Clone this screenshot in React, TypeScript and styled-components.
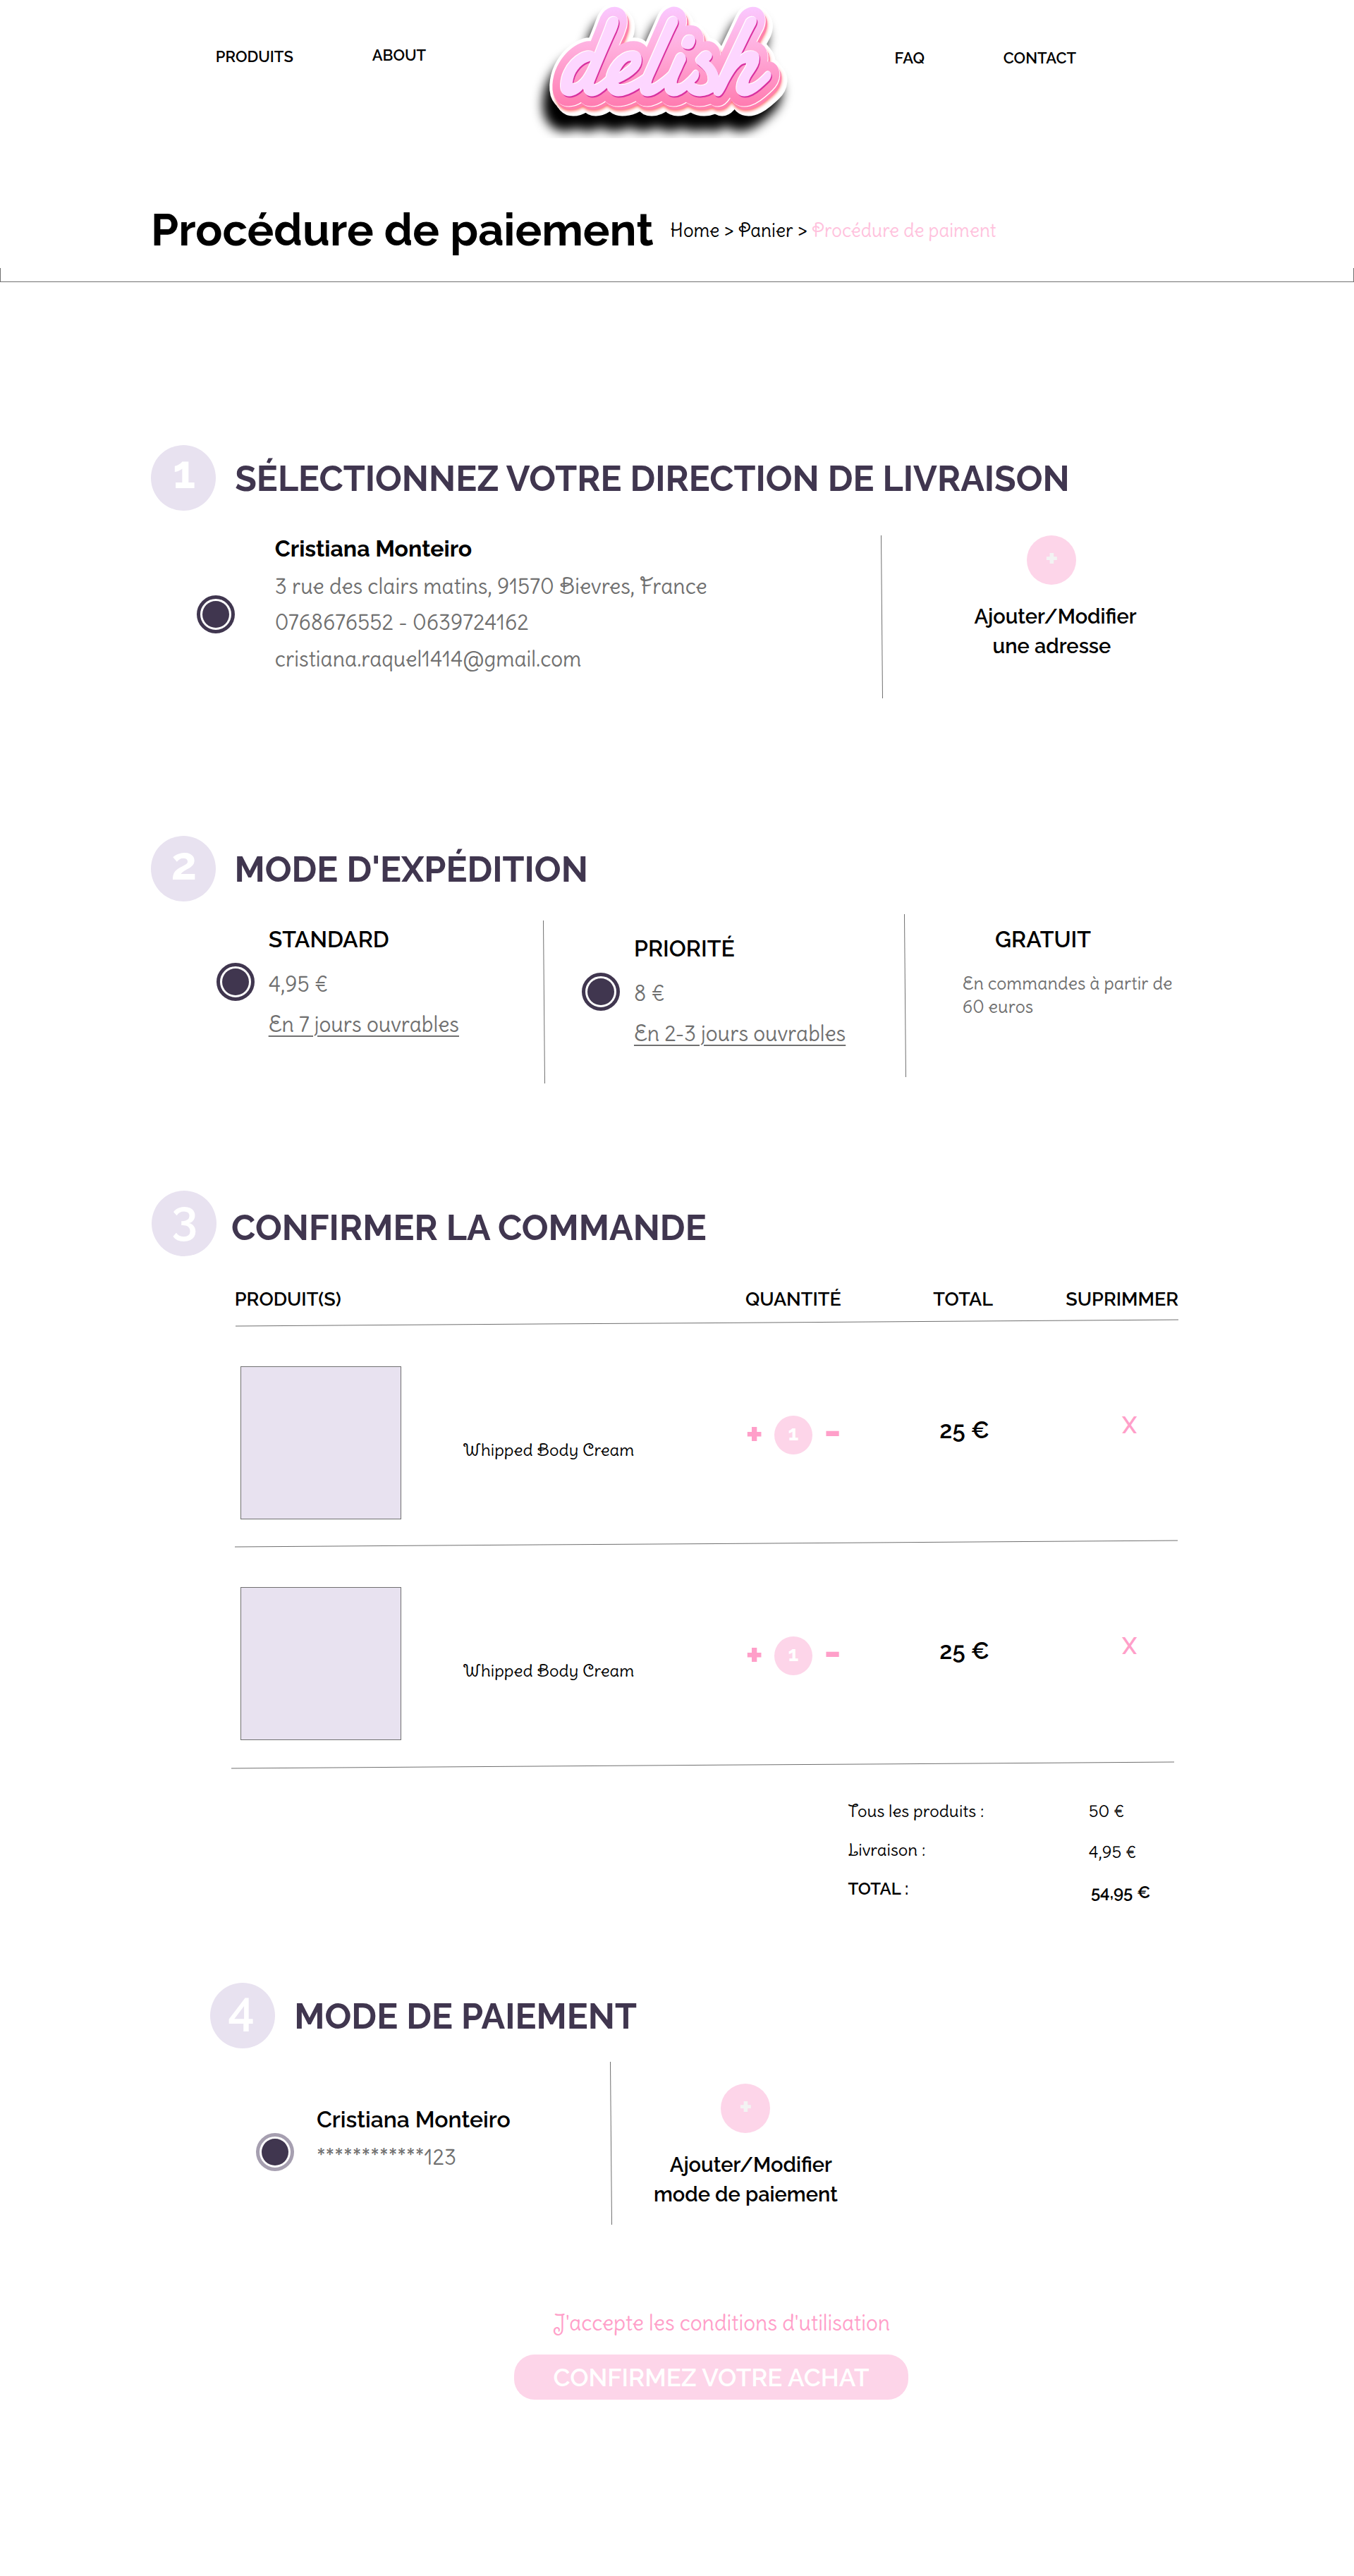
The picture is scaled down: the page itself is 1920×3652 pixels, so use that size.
import React from "react";
import styled, { createGlobalStyle } from "styled-components";

const sans = `Raleway, Lato, sans-serif`;
const swash = `"Delius Swash Caps", Lato, sans-serif`;
const plum = "#40364f";
const lilac = "#e8e2f0";
const rose = "#fdd5e9";
const pink = "#ff9fc9";
const grey = "#707070";

const GlobalStyle = createGlobalStyle`
  *, *::before, *::after { box-sizing: border-box; }
  body { margin: 0; background: #fff; color: #000; }
`;

const Page = styled.div`
  width: 1920px;
  height: 3652px;
  overflow: hidden;
  background: #fff;
`;

const Sans = styled.span<{ $size: number; $weight?: number; $lh: number; $color?: string }>`
  display: block;
  font-family: ${sans};
  font-size: ${(p) => p.$size}px;
  font-weight: ${(p) => p.$weight ?? 600};
  line-height: ${(p) => p.$lh}px;
  color: ${(p) => p.$color ?? "#000"};
  white-space: nowrap;
`;

const Swash = styled.span<{ $size: number; $lh: number; $color?: string; $underline?: boolean }>`
  display: block;
  font-family: ${swash};
  font-size: ${(p) => p.$size}px;
  line-height: ${(p) => p.$lh}px;
  color: ${(p) => p.$color ?? grey};
  text-decoration: ${(p) => (p.$underline ? "underline" : "none")};
  text-decoration-thickness: 2px;
  text-underline-offset: 5px;
`;

const TopBar = styled.header`
  display: flex;
  height: 196px;
  padding-left: 305.8px;
`;
const NavLink = styled.a<{ $width: number; $top: number }>`
  width: ${(p) => p.$width}px;
  padding-top: ${(p) => p.$top}px;
  font: 600 22px/26px ${sans};
  color: #000;
  white-space: nowrap;
`;
const LogoBox = styled.div`
  width: 480px;
  height: 196px;
  margin-right: 88.6px;
  overflow: hidden;
`;

const TitleRow = styled.div`
  display: flex;
  height: 184px;
  padding: 91.5px 0 0 214px;
`;
const Title = styled.h1`
  width: 736.3px;
  margin: 0;
  font: 700 63px/76px ${sans};
  white-space: nowrap;
`;
const Breadcrumb = styled.nav`
  margin-top: 21.5px;
  font: 400 26px/36px ${swash};
  white-space: nowrap;
`;
const Current = styled.span`
  color: #ffc2dd;
`;
const TitleRule = styled.div`
  height: 20px;
  border: 1px solid ${grey};
  border-top: 0;
`;

const Steps = styled.main`
  padding-top: 231px;
`;
const Section = styled.section<{ $height: number }>`
  height: ${(p) => p.$height}px;
`;
const StepHead = styled.div<{ $left: number }>`
  display: flex;
  height: 93px;
  padding-left: ${(p) => p.$left}px;
`;
const StepBadge = styled.div<{ $indent: number }>`
  width: 92px;
  height: 93px;
  padding-left: ${(p) => p.$indent}px;
  border-radius: 50%;
  background: ${lilac};
`;
const StepTitle = styled.h2<{ $gap: number; $top: number }>`
  margin: ${(p) => p.$top}px 0 0 ${(p) => p.$gap}px;
  font: 700 50px/60px ${sans};
  color: ${plum};
  white-space: nowrap;
`;

const Columns = styled.div<{ $left: number }>`
  display: flex;
  align-items: flex-start;
  padding-left: ${(p) => p.$left}px;
`;
const RadioRing = styled.span<{ $top: number; $left?: number; $soft?: boolean }>`
  display: flex;
  flex: none;
  align-items: center;
  justify-content: center;
  width: 54px;
  height: 54px;
  margin-top: ${(p) => p.$top}px;
  margin-left: ${(p) => p.$left ?? 0}px;
  border: 5px solid ${(p) => (p.$soft ? "#a69fb0" : plum)};
  border-radius: 50%;
`;
const RadioDot = styled.span`
  width: 38px;
  height: 38px;
  border-radius: 50%;
  background: ${plum};
`;
const Details = styled.div<{ $left: number; $top: number; $width: number }>`
  width: ${(p) => p.$width}px;
  margin-left: ${(p) => p.$left}px;
  margin-top: ${(p) => p.$top}px;
`;
const Indented = styled.div`
  padding-left: 46.3px;
`;
const Lines = styled.div<{ $gap: number }>`
  margin-top: ${(p) => p.$gap}px;
`;
const VRule = styled.div<{ $top: number }>`
  flex: none;
  width: 1px;
  height: 231px;
  margin-top: ${(p) => p.$top}px;
  background: ${grey};
  transform: rotate(-0.5deg);
`;
const HRule = styled.div<{ $left: number; $top?: number }>`
  width: 1337px;
  height: 1px;
  margin: ${(p) => p.$top ?? 0}px 0 0 ${(p) => p.$left}px;
  background: ${grey};
  transform: rotate(-0.386deg);
`;
const AddBlock = styled.button<{ $left: number; $top: number; $width: number }>`
  display: flex;
  flex-direction: column;
  align-items: center;
  width: ${(p) => p.$width}px;
  margin: ${(p) => p.$top}px 0 0 ${(p) => p.$left}px;
  padding: 0;
  border: 0;
  background: none;
`;
const AddCircle = styled.span`
  width: 70px;
  height: 70px;
  margin-bottom: 25px;
  border-radius: 50%;
  background: ${rose};
  text-align: center;
`;
const AddLine = styled.span<{ $shift?: number }>`
  padding-left: ${(p) => p.$shift ?? 0}px;
  font: 600 29px/41.7px ${sans};
  color: #000;
  white-space: nowrap;
`;

const TableHead = styled.div`
  display: grid;
  grid-template-columns: 724.3px 266.2px 188px 170px;
  padding: 45px 0 0 332.8px;
`;
const ItemRow = styled.div`
  display: flex;
  align-items: flex-start;
  height: 312.2px;
  padding-left: 341px;
`;
const Thumb = styled.div`
  width: 228px;
  height: 217px;
  margin-top: 60.7px;
  border: 1px solid ${grey};
  background: ${lilac};
`;
const Cell = styled.div<{ $width: number; $top: number; $left?: number }>`
  display: flex;
  width: ${(p) => p.$width}px;
  margin-left: ${(p) => p.$left ?? 0}px;
  padding-top: ${(p) => p.$top}px;
`;
const QtyCircle = styled.span`
  width: 54px;
  height: 55px;
  border-radius: 50%;
  background: ${rose};
  text-align: center;
`;
const QtySign = styled.span<{ $width: number; $indent?: number; $lh: number }>`
  width: ${(p) => p.$width}px;
  height: 55px;
  padding-left: ${(p) => p.$indent ?? 0}px;
  font: 700 60px/${(p) => p.$lh}px ${sans};
  color: ${pink};
`;
const Totals = styled.div`
  display: grid;
  grid-template-columns: 341.4px 130px;
  grid-auto-rows: 55px;
  margin: 37.6px 0 0 1202.4px;
`;
const Amount = styled.div<{ $top?: number; $left?: number }>`
  padding: ${(p) => p.$top ?? 0}px 0 0 ${(p) => p.$left ?? 0}px;
`;
const Terms = styled.div`
  padding: 1.5px 0 0 784.7px;
  margin-bottom: 27.1px;
`;
const Confirm = styled.button`
  display: block;
  width: 559px;
  height: 64px;
  margin-left: 729px;
  padding: 0 0 0 55.5px;
  border: 0;
  border-radius: 29px;
  background: ${rose};
  text-align: left;
`;

const Logo = () => (
  <svg width="480" height="196" viewBox="0 0 480 196" role="img" aria-label="delish">
    <defs>
      <linearGradient id="candy" gradientUnits="userSpaceOnUse" x1="0" y1="-122" x2="0" y2="18">
        <stop offset="0" stopColor="#fac8ff" />
        <stop offset="0.4" stopColor="#ffb0de" />
        <stop offset="1" stopColor="#ff7bb0" />
      </linearGradient>
      <filter id="shade" x="-20%" y="-30%" width="140%" height="180%">
        <feGaussianBlur stdDeviation="7.5" />
      </filter>
      <filter id="glow" x="-20%" y="-30%" width="140%" height="180%">
        <feGaussianBlur stdDeviation="2" />
      </filter>
      <g id="word">
        <text
          transform="translate(92 132.5) skewX(-3)"
          fontFamily={`Damion, Pacifico, "Liberation Serif", cursive`}
          fontSize="167"
          textLength="284"
          lengthAdjust="spacingAndGlyphs"
        >
          delish
        </text>
      </g>
    </defs>
    <g strokeLinejoin="round" strokeLinecap="round">
      <use href="#word" x="-5" y="25" fill="#000" stroke="#000" strokeWidth="52" filter="url(#shade)" />
      <use href="#word" x="0" y="0.5" fill="#fff" stroke="#fff" strokeWidth="41" />
      <use href="#word" x="4" y="5" fill="#fff" stroke="#fff" strokeWidth="41" />
      <use href="#word" x="7" y="9" fill="#fff" stroke="#fff" strokeWidth="41" />
      <use href="#word" x="3" y="7" fill="#ff6a6a" stroke="#ff6a6a" strokeWidth="31" filter="url(#glow)" />
      <use href="#word" x="3" y="5" fill="#ff80ae" stroke="#ff80ae" strokeWidth="31" />
      <use href="#word" x="1" y="1.3" fill="#fff" stroke="#fff" strokeWidth="31" />
      <use href="#word" fill="url(#candy)" stroke="url(#candy)" strokeWidth="31" />
      <use href="#word" x="1.2" y="2.8" fill="#d8309f" stroke="#d8309f" strokeWidth="3" />
      <use href="#word" x="-1" y="-1" fill="#fff" stroke="#fff" strokeWidth="3" />
      <use href="#word" fill="#fdd6ff" stroke="#fdd6ff" strokeWidth="3" />
    </g>
  </svg>
);

const Radio = ({ top, left, soft }: { top: number; left?: number; soft?: boolean }) => (
  <RadioRing $top={top} $left={left} $soft={soft}>
    <RadioDot />
  </RadioRing>
);

const Add = ({ left, top, width, shift, label }: { left: number; top: number; width: number; shift: number; label: string }) => (
  <AddBlock $left={left} $top={top} $width={width}>
    <AddCircle>
      <Sans $size={45} $weight={700} $lh={68.6} $color="#f3f3f3">+</Sans>
    </AddCircle>
    <AddLine $shift={shift}>Ajouter/Modifier</AddLine>
    <AddLine>{label}</AddLine>
  </AddBlock>
);

const Item = ({ name, quantity, price }: { name: string; quantity: number; price: string }) => (
  <ItemRow>
    <Thumb />
    <Cell $left={87.5} $width={400.6} $top={164}>
      <Swash $size={24} $lh={30} $color="#000">{name}</Swash>
    </Cell>
    <Cell $width={275.2} $top={130.7}>
      <QtySign $width={40.9} $lh={52}>+</QtySign>
      <QtyCircle>
        <Sans $size={30} $weight={700} $lh={49} $color="#fff">{quantity}</Sans>
      </QtyCircle>
      <QtySign $width={40} $indent={16} $lh={42}>-</QtySign>
    </Cell>
    <Cell $width={258.7} $top={131.7}>
      <Sans $size={33} $lh={40}>{price}</Sans>
    </Cell>
    <Cell $width={30} $top={124.5}>
      <Sans $size={33} $lh={40} $color={pink}>X</Sans>
    </Cell>
  </ItemRow>
);

export default function App() {
  return (
    <>
      <GlobalStyle />
      <Page>
        <TopBar>
          <NavLink $width={221.9} $top={67}>PRODUITS</NavLink>
          <NavLink $width={172.3} $top={65}>ABOUT</NavLink>
          <LogoBox><Logo /></LogoBox>
          <NavLink $width={154.2} $top={69}>FAQ</NavLink>
          <NavLink $width={110} $top={69}>CONTACT</NavLink>
        </TopBar>
        <TitleRow>
          <Title>Procédure de paiement</Title>
          <Breadcrumb>
            Home &gt; Panier &gt; <Current>Procédure de paiment</Current>
          </Breadcrumb>
        </TitleRow>
        <TitleRule />

        <Steps>
          <Section $height={553.7}>
            <StepHead $left={214}>
              <StepBadge $indent={31}><Sans $size={65} $weight={700} $lh={77.6} $color="#fff">1</Sans></StepBadge>
              <StepTitle $gap={27.2} $top={17.8}>SÉLECTIONNEZ VOTRE DIRECTION DE LIVRAISON</StepTitle>
            </StepHead>
            <Columns $left={279}>
              <Radio top={120.3} />
              <Details $left={56.8} $top={35.4} $width={860}>
                <Sans $size={32} $weight={700} $lh={38}>Cristiana Monteiro</Sans>
                <Lines $gap={8.2}>
                  <Swash $size={30} $lh={51.6}>3 rue des clairs matins, 91570 Bievres, France</Swash>
                  <Swash $size={30} $lh={51.6}>0768676552 - 0639724162</Swash>
                  <Swash $size={30} $lh={51.6}>cristiana.raquel1414@gmail.com</Swash>
                </Lines>
              </Details>
              <VRule $top={35} />
              <Add left={120.7} top={35} width={240} shift={10} label="une adresse" />
            </Columns>
          </Section>

          <Section $height={503.3}>
            <StepHead $left={214}>
              <StepBadge $indent={28.5}><Sans $size={65} $weight={700} $lh={78.8} $color="#fff">2</Sans></StepBadge>
              <StepTitle $gap={26.5} $top={18.4}>MODE D'EXPÉDITION</StepTitle>
            </StepHead>
            <Columns $left={307}>
              <Radio top={87.8} />
              <Details $left={19.7} $top={35.5} $width={390.4}>
                <Sans $size={32} $lh={38}>STANDARD</Sans>
                <Lines $gap={15.5}>
                  <Swash $size={30} $lh={57}>4,95 €</Swash>
                  <Swash $size={30} $lh={57} $underline as="u">En 7 jours ouvrables</Swash>
                </Lines>
              </Details>
              <VRule $top={27.3} />
              <Radio top={101} left={53} />
              <Details $left={19.9} $top={48.7} $width={383.8}>
                <Sans $size={32} $lh={38}>PRIORITÉ</Sans>
                <Lines $gap={15.5}>
                  <Swash $size={30} $lh={57}>8 €</Swash>
                  <Swash $size={30} $lh={57} $underline as="u">En 2-3 jours ouvrables</Swash>
                </Lines>
              </Details>
              <VRule $top={18.3} />
              <Details $left={81} $top={35.5} $width={310}>
                <Indented><Sans $size={32} $lh={38}>GRATUIT</Sans></Indented>
                <Lines $gap={27.2}>
                  <Swash $size={25} $lh={32.3}>En commandes à partir de 60 euros</Swash>
                </Lines>
              </Details>
            </Columns>
          </Section>

          <Section $height={1123}>
            <StepHead $left={215}>
              <StepBadge $indent={28.2}><Sans $size={67} $lh={77} $color="#fff">3</Sans></StepBadge>
              <StepTitle $gap={21.1} $top={22.8}>CONFIRMER LA COMMANDE</StepTitle>
            </StepHead>
            <TableHead>
              <Sans $size={27} $lh={32}>PRODUIT(S)</Sans>
              <Sans $size={27} $lh={32}>QUANTITÉ</Sans>
              <Sans $size={27} $lh={32}>TOTAL</Sans>
              <Sans $size={27} $lh={32}>SUPRIMMER</Sans>
            </TableHead>
            <HRule $left={334} $top={17.3} />
            <Item name="Whipped Body Cream" quantity={1} price="25 €" />
            <HRule $left={333} />
            <Item name="Whipped Body Cream" quantity={1} price="25 €" />
            <HRule $left={328} />
            <Totals>
              <Swash $size={24} $lh={55} $color="#000">Tous les produits :</Swash>
              <Amount><Swash $size={24} $lh={55} $color="#000">50 €</Swash></Amount>
              <Swash $size={24} $lh={55} $color="#000">Livraison :</Swash>
              <Amount $top={2.7}><Swash $size={24} $lh={55} $color="#000">4,95 €</Swash></Amount>
              <Sans $size={24} $lh={55}>TOTAL :</Sans>
              <Amount $top={5} $left={3.1}><Sans $size={24} $lh={55}>54,95 €</Sans></Amount>
            </Totals>
          </Section>

          <Section $height={462.4}>
            <StepHead $left={298}>
              <StepBadge $indent={25.3}><Sans $size={67} $lh={74} $color="#fff">4</Sans></StepBadge>
              <StepTitle $gap={27.3} $top={18}>MODE DE PAIEMENT</StepTitle>
            </StepHead>
            <Columns $left={363}>
              <Radio top={120.3} soft />
              <Details $left={31.9} $top={82} $width={417.1}>
                <Sans $size={32} $lh={38}>Cristiana Monteiro</Sans>
                <Lines $gap={7.8}><Swash $size={30} $lh={52}>************123</Swash></Lines>
              </Details>
              <VRule $top={18.7} />
              <Add left={50.4} top={50} width={280} shift={15} label="mode de paiement" />
            </Columns>
          </Section>
        </Steps>

        <Terms>
          <Swash $size={30} $lh={36} $color={pink}>J'accepte les conditions d'utilisation</Swash>
        </Terms>
        <Confirm>
          <Sans $size={35} $lh={65} $color="#fff">CONFIRMEZ VOTRE ACHAT</Sans>
        </Confirm>
      </Page>
    </>
  );
}
